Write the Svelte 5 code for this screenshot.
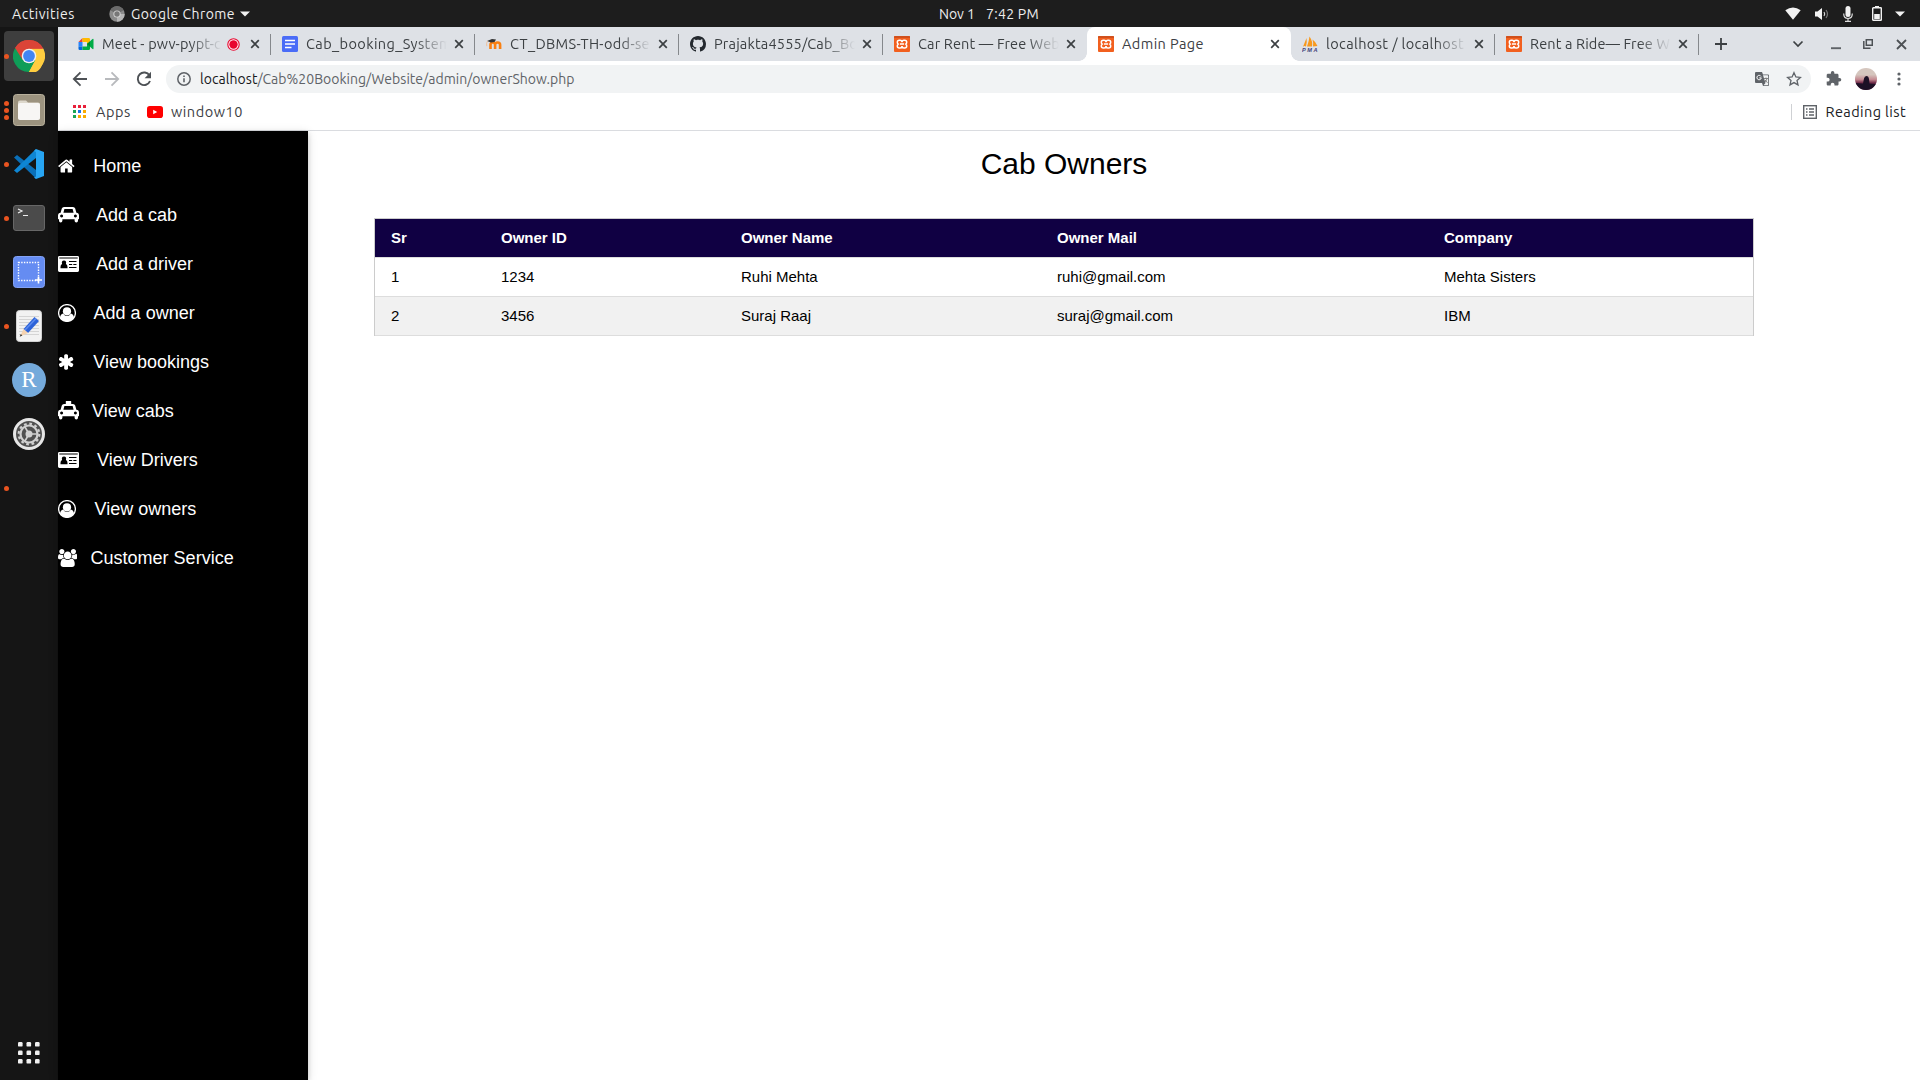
<script>
  const tabs = [
    { icon: 'meet', title: 'Meet - pwv-pypt-c', width: 119, recording: true, divider: true },
    { icon: 'docs', title: 'Cab_booking_System', width: 146, divider: true },
    { icon: 'moodle', title: 'CT_DBMS-TH-odd-se', width: 140, divider: true },
    { icon: 'github', title: 'Prajakta4555/Cab_Bo', width: 144, divider: true },
    { icon: 'xampp', title: 'Car Rent — Free Web', width: 142 },
    { icon: 'xampp', title: 'Admin Page', width: 82, active: true },
    { icon: 'pma', title: 'localhost / localhost', width: 138, divider: true },
    { icon: 'xampp', title: 'Rent a Ride— Free W', width: 140, divider: true }
  ];

  const links = [
    { icon: 'home', label: 'Home', indent: 35.3 },
    { icon: 'car', label: 'Add a cab', indent: 38 },
    { icon: 'card', label: 'Add a driver', indent: 38 },
    { icon: 'user', label: 'Add a owner', indent: 35.6 },
    { icon: 'asterisk', label: 'View bookings', indent: 35.3 },
    { icon: 'taxi', label: 'View cabs', indent: 34 },
    { icon: 'card', label: 'View Drivers', indent: 39 },
    { icon: 'user', label: 'View owners', indent: 36.5 },
    { icon: 'users', label: 'Customer Service', indent: 32.6 }
  ];

  const dock = [
    { icon: 'chrome', dots: 1, current: true },
    { icon: 'files', dots: 3 },
    { icon: 'code', dots: 1 },
    { icon: 'terminal', dots: 1 },
    { icon: 'screenshot', dots: 0 },
    { icon: 'editor', dots: 1 },
    { icon: 'r', dots: 0 },
    { icon: 'settings', dots: 0 },
    { icon: 'blank', dots: 1 }
  ];

  const owners = [
    [1, 1234, 'Ruhi Mehta', 'ruhi@gmail.com', 'Mehta Sisters'],
    [2, 3456, 'Suraj Raaj', 'suraj@gmail.com', 'IBM']
  ];

  // Tracks a label out or in until it fills the given width.
  function fit(node, width) {
    const natural = node.getBoundingClientRect().width;
    node.style.letterSpacing = (width - natural) / node.textContent.length + 'px';
  }
</script>

{#snippet cross()}
  <svg width="10" height="10" viewBox="0 0 10 10"><path d="M1.2 1.2l7.6 7.6M8.8 1.2L1.2 8.8" stroke="#3c4043" stroke-width="1.7" /></svg>
{/snippet}

{#snippet favicon(name)}
  <svg class="favicon" width="16" height="16" viewBox="0 0 16 16">
    {#if name === 'meet'}
      <path d="M4.5 2v4H0.5z" fill="#ea4335" />
      <path d="M.5 6h4v4.5h-4z" fill="#2684fc" />
      <path d="M.5 10.500h4V14H1.800A1.300 1.300 0 0 1 .5 12.700z" fill="#0066da" />
      <path d="M4.500 2h6.200A1.300 1.300 0 0 1 12 3.300V7L9 9.500V6H4.500z" fill="#ffba00" />
      <path d="M4.500 10.500H9V8l3-1.500v6.200A1.300 1.300 0 0 1 10.700 14H4.500z" fill="#00ac47" />
      <path d="M9 8l5.500-5q1-.5 1 .5v9q0 1-1 .5z" fill="#00ac47" />
      <path d="M9 8l3-2.600v5.200z" fill="#00832d" />
    {:else if name === 'docs'}
      <rect width="16" height="16" rx="1.500" fill="#4a6cf7" />
      <path d="M3 4.500h10M3 8h10M3 11.500h6.500" stroke="#fff" stroke-width="1.500" />
    {:else if name === 'moodle'}
      <path d="M4.500 13V8.800q0-2.300 2.300-2.300t2.300 2.300V13M9.100 13V8.800q0-2.300 2.500-2.300t2.500 2.300V13" fill="none" stroke="#f98012" stroke-width="2.600" />
      <path d="M1 5l5-2 4 .5L8.500 6 5 6.500z" fill="#333" />
      <path d="M1.500 5.200q-1.500 2-.7 5" fill="none" stroke="#f3b98a" stroke-width=".8" />
    {:else if name === 'github'}
      <path fill="#24292f" d="M8 0C3.580 0 0 3.580 0 8c0 3.540 2.290 6.530 5.470 7.590.4.070.55-.17.55-.38 0-.19-.01-.82-.01-1.490-2.010.37-2.530-.49-2.690-.94-.09-.23-.48-.94-.82-1.130-.28-.15-.68-.52-.01-.53.63-.01 1.080.58 1.230.82.72 1.210 1.870.87 2.330.66.07-.52.28-.87.51-1.070-1.780-.2-3.640-.89-3.640-3.950 0-.87.31-1.590.82-2.150-.08-.2-.36-1.020.08-2.120 0 0 .67-.21 2.200.82.64-.18 1.320-.27 2-.27s1.360.09 2 .27c1.530-1.040 2.200-.82 2.200-.82.44 1.100.16 1.920.08 2.120.51.56.82 1.270.82 2.150 0 3.070-1.870 3.750-3.650 3.950.29.25.54.73.54 1.480 0 1.070-.01 1.930-.01 2.200 0 .21.15.46.55.38A8.010 8.010 0 0 0 16 8c0-4.420-3.580-8-8-8z" />
    {:else if name === 'xampp'}
      <rect width="16" height="16" rx="1" fill="#f2601f" />
      <path d="M0 1a1 1 0 0 1 1-1h14a1 1 0 0 1 1 1v1H0z" fill="#d1501c" />
      <path d="M8 6.300Q8 4.300 10 4.300h.7q2 0 2 2 0 1.200-.9 1.800.9.600.9 1.800 0 2-2 2H10q-2 0-2-2 0 2-2 2h-.7q-2 0-2-2 0-1.200.9-1.800-.9-.6-.9-1.800 0-2 2-2H6q2 0 2 2zM6 8.100h4" fill="none" stroke="#fff" stroke-width="1.500" />
    {:else}
      <path d="M4 10.500q-1.500-1-3 .2Q3 6 4.500 2q.8 4-.5 8.500zM5 10.500Q7 5 7.500.5q3.500 5 2.500 10zM11 10.500q.5-4-.5-7Q14 6 15.500 10z" fill="#f8991d" />
      <text x="0" y="15.500" font-family="Liberation Sans, sans-serif" font-weight="700" font-style="italic" font-size="5.600" textLength="15.500" fill="#43437a">PMA</text>
    {/if}
  </svg>
{/snippet}

{#snippet menuIcon(name)}
  {#if name === 'home'}
    <svg width="18" height="18" viewBox="64 0 1792 1792"><path d="M1472 992v480q0 26-19 45t-45 19h-384v-384h-256v384h-384q-26 0-45-19t-19-45v-480q0-1 .5-3t.5-3l575-474 575 474q1 2 1 6zm223-69l-62 74q-8 9-21 11h-3q-13 0-21-7l-692-577-692 577q-12 8-24 7-13-2-21-11l-62-74q-8-10-7-23.500t11-21.500l719-599q32-26 76-26t76 26l244 204v-195q0-14 9-23t23-9h192q14 0 23 9t9 23v408l219 182q10 8 11 21.500t-7 23.500z" /></svg>
  {:else if name === 'asterisk'}
    <svg width="18" height="18" viewBox="90 0 1792 1792"><path d="M1546 1050q46 26 59.500 77.500t-12.500 97.500l-64 110q-26 46-77.500 59.500t-97.500-12.500l-266-153v307q0 52-38 90t-90 38h-128q-52 0-90-38t-38-90v-307l-266 153q-46 26-97.500 12.500t-77.500-59.500l-64-110q-26-46-12.500-97.500t59.500-77.500l266-154-266-154q-46-26-59.500-77.500t12.500-97.500l64-110q26-46 77.500-59.500t97.500 12.500l266 153v-307q0-52 38-90t90-38h128q52 0 90 38t38 90v307l266-153q46-26 97.500-12.500t77.500 59.500l64 110q26 46 12.500 97.500t-59.500 77.500l-266 154z" /></svg>
  {:else if name === 'car' || name === 'taxi'}
    <svg class={name} width="21" height="19" viewBox="0 0 21 19">
      {#if name === 'taxi'}<path d="M7.800.3q0-.3.300-.3h4.800q.3 0 .3.300V4H7.800z" />{/if}
      <path transform="translate(0 1.300)" fill-rule="evenodd" d="M6 1.700h9q1.700 0 2.200 1.500l1.200 4.300q2.600.2 2.600 2.800v3.200q0 .5-.5.5H20v1.500q0 1.700-1.700 1.700t-1.700-1.700V14H4.400v1.500q0 1.700-1.700 1.700T1 15.500V14H.5q-.5 0-.5-.5v-3.200q0-2.600 2.600-2.800l1.200-4.300Q4.300 1.700 6 1.700zM6.400 3.800L5.400 7.500h10.200l-1-3.700zM3.600 9.300a1.500 1.500 0 1 0 .01 0zM17.400 9.300a1.500 1.500 0 1 0 .01 0z" />
    </svg>
  {:else if name === 'card'}
    <svg width="21" height="18" viewBox="0 0 21 18">
      <path fill-rule="evenodd" d="M1.400 1h18.200q1.400 0 1.400 1.400v13.200q0 1.400-1.400 1.400H1.400Q0 17 0 15.600V2.400Q0 1 1.400 1zM1.300 2.500v1h18.400v-1zM2.500 13.200h7v-1.300q0-2.500-1.600-2.900 1-3.200-1.900-3.400-2.900.2-1.900 3.400Q2.500 9.400 2.500 11.900zM11 6v1h7.500V6zM11 9v1h3.200V9zM15.300 9v1h3.200V9zM11 12v1h7.500v-1z" />
    </svg>
  {:else if name === 'user'}
    <svg width="18" height="18" viewBox="0 0 18 18">
      <circle cx="9" cy="9" r="8.400" fill="none" stroke="#fff" stroke-width="1.300" />
      <circle cx="9" cy="7.300" r="4.100" />
      <path d="M2 13.400q.5-3.400 3.200-3.900 1.500 2.500 3.800 2.500t3.800-2.500q2.700.5 3.200 3.900-2.600 3.900-7 3.900t-7-3.900z" />
    </svg>
  {:else}
    <svg width="19.300" height="18" viewBox="0 0 1920 1792"><path d="M593 896q-162 5-265 128h-134q-82 0-138-40.500t-56-118.500q0-353 124-353 6 0 43.500 21t97.500 42.500 119 21.500q67 0 133-23-5 37-5 66 0 159 81 256zm1071 637q0 120-73 189.500t-194 69.500h-874q-121 0-194-69.500t-73-189.500q0-53 3.500-103.500t14-109 26.500-108.500 43-97.500 62-81 85.500-53.500 111.500-20q10 0 43 21.500t73 48 107 48 135 21.500 135-21.500 107-48 73-48 43-21.500q61 0 111.500 20t85.500 53.500 62 81 43 97.500 26.500 108.500 14 109 3.500 103.500zm-1024-1277q0 106-75 181t-181 75-181-75-75-181 75-181 181-75 181 75 75 181zm704 384q0 159-112.500 271.500t-271.500 112.500-271.500-112.500-112.500-271.500 112.500-271.500 271.500-112.500 271.500 112.500 112.500 271.500zm576 225q0 78-56 118.500t-138 40.500h-134q-103-123-265-128 93-134 93-293 0-29-5-66 66 23 133 23 59 0 119-21.500t97.500-42.500 43.500-21q112 0 112 353zm-128-609q0 106-75 181t-181 75-181-75-75-181 75-181 181-75 181 75 75 181z" /></svg>
  {/if}
{/snippet}

{#snippet dockIcon(name)}
  {#if name === 'r'}
    <span class="r-logo">R</span>
  {:else}
    <svg width="32" height="32" viewBox="0 0 32 32">
      {#if name === 'chrome'}
        <path d="M16 16L2.140 8A16 16 0 0 1 29.860 8z" fill="#db4437" />
        <path d="M16 16L29.860 8A16 16 0 0 1 16 32l-3-6z" fill="#ffcd40" />
        <path d="M16 16l6.500 4L16 32A16 16 0 0 1 2.140 8z" fill="#0f9d58" />
        <path d="M16 8.500h14.150Q33 16 29 25.300T16 32l6.500-12z" fill="#ffcd40" />
        <path d="M2.140 8L9.600 20l1-8L16 8.700h14.200A16 16 0 0 0 2.140 8z" fill="#db4437" />
        <circle cx="16" cy="16" r="7.300" fill="#f1f1f1" />
        <circle cx="16" cy="16" r="5.900" fill="#4285f4" />
      {:else if name === 'files'}
        <rect x=".5" y=".5" width="31" height="31" rx="3" fill="#9c937f" stroke="#b8b09c" />
        <path d="M5 8.500q0-2 2-2h6l2 2h10q2 0 2 2v13q0 2-2 2H7q-2 0-2-2z" fill="#ddd8cc" />
        <rect x="5" y="9" width="22" height="17" rx="2" fill="#f7f6f4" />
      {:else if name === 'code'}
        <path d="M1 9.500L4 7l19 15v8.500z" fill="#0a6fb8" />
        <path d="M1 22.500L4 25 23 10V1z" fill="#0e86d4" />
        <path d="M23 1l8 3v24l-8 3-2-1.500 2-1V4l-2-1z" fill="#27a5f3" />
      {:else if name === 'terminal'}
        <rect x=".5" y="3.500" width="31" height="25" rx="2.500" fill="#4b4b4b" stroke="#676767" />
        <path d="M5 7l4 2-4 2M10 13.500h5" fill="none" stroke="#eee" stroke-width="1.200" />
      {:else if name === 'screenshot'}
        <rect x=".5" y=".5" width="31" height="31" rx="3" fill="#658cf2" stroke="#83a2f5" />
        <path d="M5.500 6.500h20v18h-20z" fill="none" stroke="#fff" stroke-width="1.400" stroke-dasharray="1.400 1.300" />
        <path d="M25.500 20.500v7M22 24h7" stroke="#fff" stroke-width="1.600" />
      {:else if name === 'editor'}
        <rect x="3.500" y=".5" width="25" height="31" rx="3" fill="#f2f2f2" stroke="#d2d2d2" />
        <path d="M6 6.500h20M6 9.500h20M6 12.500h20M6 15.500h20M6 18.500h20M6 21.500h20M6 24.500h20" stroke="#d4d4d4" />
        <path d="M10.500 19L21.500 7l4.500 4L15 23z" fill="#2d63d8" />
        <path d="M12 20L23 8.500" stroke="#5c8bf0" stroke-width="1.500" />
        <path d="M10.500 19l4.500 4-8 3.500z" fill="#f5d3b0" /><path d="M7.800 24l1.500 1.500-2.600 1.200z" fill="#333" />
      {:else if name === 'settings'}
        <circle cx="16" cy="16" r="14.500" fill="#505050" stroke="#e6e6e6" stroke-width="3" />
        <circle cx="16" cy="16" r="10.300" fill="none" stroke="#d0d0d0" stroke-width="2.200" stroke-dasharray="2.700 2.693" />
        <circle cx="16" cy="16" r="8.500" fill="none" stroke="#d0d0d0" stroke-width="2.200" />
        <circle cx="16" cy="16" r="3.500" fill="#d0d0d0" />
        <path d="M16 16l-4-7M16 16h8M16 16l-4 7" stroke="#d0d0d0" stroke-width="1.600" />
      {/if}
    </svg>
  {/if}
{/snippet}

<div class="desktop">
  <header class="topbar">
    <div class="topbar-left">
      <span class="label activities" use:fit={63}>Activities</span>
      <svg width="16" height="16" viewBox="0 0 16 16">
        <circle cx="8" cy="8" r="7.700" fill="#8b8b8b" />
        <path d="M8 8L1.300 4.200A7.700 7.700 0 0 1 14.700 4.200z" fill="#6b6b6b" />
        <path d="M8 8h7.700A7.700 7.700 0 0 1 8 15.700z" fill="#b5b5b5" />
        <circle cx="8" cy="8" r="3.600" fill="#d8d8d8" /><circle cx="8" cy="8" r="2.700" fill="#777" />
      </svg>
      <span class="label app" use:fit={104}>Google Chrome</span>
      <svg class="caret" width="10" height="6" viewBox="0 0 10 6"><path d="M0 .5h10l-5 5z" fill="#f2f2f2" /></svg>
    </div>
    <div class="clock"><span class="label" use:fit={36}>Nov 1</span><span class="label" use:fit={53}>7:42 PM</span></div>
    <div class="status">
      <svg width="16" height="13" viewBox="0 0 16 13"><path d="M.3 3.200Q8-2.200 15.700 3.200L8 12.700z" fill="#f2f2f2" /></svg>
      <svg width="16" height="14" viewBox="0 0 16 14"><path d="M1 4.500h2.500L8 1v12L3.500 9.500H1z" fill="#f2f2f2" /><path d="M10 5q1.500 2 0 4" fill="none" stroke="#ddd" stroke-width="1.200" /><path d="M12 3q3 4 0 8" fill="none" stroke="#777" stroke-width="1.200" /></svg>
      <svg width="10" height="16" viewBox="0 0 10 16"><rect x="2.500" width="5" height="11" rx="2.500" fill="#f2f2f2" /><path d="M.7 7.500q0 5 4.300 5t4.300-5M5 12.500V15M2 15.300h6" fill="none" stroke="#ddd" stroke-width="1.200" /></svg>
      <svg width="10" height="15" viewBox="0 0 10 15"><path d="M3 0h4v2H3z" fill="#f2f2f2" /><rect x=".7" y="1.700" width="8.600" height="12.600" rx=".6" fill="none" stroke="#f2f2f2" stroke-width="1.400" /><path d="M2.200 8h5.600v5H2.200z" fill="#f2f2f2" /></svg>
      <svg width="10" height="6" viewBox="0 0 10 6"><path d="M0 .5h10l-5 5z" fill="#f2f2f2" /></svg>
    </div>
  </header>

  <div class="workspace">
    <aside class="dock">
      {#each dock as app}
        <div class="slot" class:current={app.current}>
          <span class="dots">{#each Array(app.dots) as _}<i></i>{/each}</span>
          {@render dockIcon(app.icon)}
        </div>
      {/each}
      <div class="slot grid-button">
        <svg width="22" height="22" viewBox="0 0 22 22">
          {#each [0, 8.500, 17] as y}{#each [0, 8.500, 17] as x}<rect {x} {y} width="4.600" height="4.600" rx="1.200" fill="#f0f0f0" />{/each}{/each}
        </svg>
      </div>
    </aside>

    <section class="browser">
      <nav class="tabs">
        {#each tabs as tab}
          <div class="tab" class:active={tab.active} class:divider={tab.divider}>
            {@render favicon(tab.icon)}
            <div class="title" class:fade={!tab.active}><span class="label" use:fit={tab.width}>{tab.title}</span></div>
            {#if tab.recording}
              <svg class="recording" width="13" height="13" viewBox="0 0 13 13"><circle cx="6.500" cy="6.500" r="5.700" fill="#fff" stroke="#e8062f" stroke-width="1.100" /><circle cx="6.500" cy="6.500" r="4.200" fill="#e8062f" /></svg>
            {/if}
            {@render cross()}
          </div>
        {/each}
        <svg class="new-tab" width="12" height="12" viewBox="0 0 12 12"><path d="M6 0v12M0 6h12" stroke="#3c4043" stroke-width="1.800" /></svg>
        <div class="window-buttons">
          <svg width="12" height="12" viewBox="0 0 12 12"><path d="M1.500 3.500L6 8l4.500-4.500" fill="none" stroke="#3c4043" stroke-width="1.700" /></svg>
          <svg width="10" height="12" viewBox="0 0 10 12"><path d="M0 10.200h10" stroke="#5f6368" stroke-width="1.900" /></svg>
          <svg width="10" height="10" viewBox="0 0 10 10"><path d="M3.300.8h6v5.500h-6zM.8 2v7.200h6.700" fill="none" stroke="#4d5155" stroke-width="1.500" /></svg>
          <svg width="11" height="11" viewBox="0 0 11 11"><path d="M1 1l9 9M10 1l-9 9" stroke="#4d5155" stroke-width="1.800" /></svg>
        </div>
      </nav>

      <div class="toolbar">
        <svg width="16" height="16" viewBox="0 0 16 16"><path d="M15 8H2M8.500 1.300L1.800 8l6.700 6.700" fill="none" stroke="#4d5155" stroke-width="1.800" /></svg>
        <svg width="16" height="16" viewBox="0 0 16 16"><path d="M1 8h13M7.500 1.300L14.200 8l-6.700 6.700" fill="none" stroke="#b8babd" stroke-width="1.800" /></svg>
        <svg width="16" height="16" viewBox="0 0 16 16"><path d="M13.500 4.500A6.300 6.300 0 1 0 14 10" fill="none" stroke="#4d5155" stroke-width="1.900" /><path d="M15 .8v6.400H8.600z" fill="#4d5155" /></svg>
        <div class="address">
          <svg width="16" height="16" viewBox="0 0 16 16"><circle cx="8" cy="8" r="6.200" fill="none" stroke="#5f6368" stroke-width="1.500" /><path d="M8 7.200v4M8 4.500v1.600" stroke="#5f6368" stroke-width="1.600" /></svg>
          <span class="url"><b class="label" use:fit={57.5}>localhost</b><span class="label" use:fit={317}>/Cab%20Booking/Website/admin/ownerShow.php</span></span>
          <svg width="14" height="14" viewBox="0 0 14 14"><path d="M1 0h6l1 2.500h5q1 0 1 1V13q0 1-1 1H8l-1-3H1q-1 0-1-1V1q0-1 1-1z" fill="#5f6368" /><path d="M8 3.300h4.500q.7 0 .7.700v8.500q0 .7-.7.700H8.500L10.500 11z" fill="#f1f3f4" /><path d="M6 4.400a2.200 2.200 0 1 0 .3 1.500H4.300" fill="none" stroke="#fff" stroke-width="1" /><path d="M9 6.500h4M11 5.500v1M12 6.800q-.7 2.200-2.500 3.500M10 8l2.500 2.800" fill="none" stroke="#777" stroke-width=".9" /></svg>
          <svg class="star" width="16" height="16" viewBox="0 0 16 16"><path d="M8 1.700l1.900 4.200 4.500.5-3.400 3 1 4.500L8 11.600l-4 2.300 1-4.500-3.400-3 4.500-.5z" fill="none" stroke="#5f6368" stroke-width="1.300" /></svg>
        </div>
        <svg class="puzzle" width="16" height="16" viewBox="1 1 23 23"><path fill="#5f6368" d="M20.500 11H19V7c0-1.100-.9-2-2-2h-4V3.500a2.500 2.500 0 0 0-5 0V5H4c-1.100 0-1.990.9-1.990 2v3.800H3.500a2.700 2.700 0 0 1 0 5.400H2V20c0 1.100.9 2 2 2h3.800v-1.500a2.700 2.700 0 0 1 5.400 0V22H17c1.100 0 2-.9 2-2v-4h1.500a2.500 2.500 0 0 0 0-5z" /></svg>
        <span class="avatar"><svg width="22" height="22" viewBox="0 0 22 22"><path d="M0 15l8 .5 1-5Q9.500 8 11.500 8t2.500 3l.5 4.500L22 16v6H0z" fill="#1c1025" /></svg></span>
        <svg width="4" height="14" viewBox="0 0 4 14"><g fill="#5f6368"><circle cx="2" cy="2" r="1.600" /><circle cx="2" cy="7" r="1.600" /><circle cx="2" cy="12" r="1.600" /></g></svg>
      </div>

      <div class="bookmarks">
        <svg width="13" height="13" viewBox="0 0 13 13">
          <path d="M0 0h3v3H0zM5 0h3v3H5zM10 0h3v3h-3z" fill="#e8203a" /><path d="M0 5h3v3H0zM0 10h3v3H0z" fill="#1aa655" /><path d="M5 5h3v3H5z" fill="#1a73e8" /><path d="M10 5h3v3h-3zM5 10h3v3H5zM10 10h3v3h-3z" fill="#f9ab00" />
        </svg>
        <span class="label apps" use:fit={35}>Apps</span>
        <svg width="16" height="12" viewBox="0 0 16 12"><rect width="16" height="12" rx="2.800" fill="#f00" /><path d="M6.200 3.700v4.600l4-2.300z" fill="#fff" /></svg>
        <span class="label" use:fit={72}>window10</span>
        <div class="reading">
          <svg width="14" height="14" viewBox="0 0 14 14"><rect x=".7" y=".7" width="12.600" height="12.600" fill="none" stroke="#5f6368" stroke-width="1.400" /><path d="M3 4h1.500M6 4h5M3 7h1.500M6 7h5M3 10h1.500M6 10h5" stroke="#5f6368" stroke-width="1.400" /></svg>
          <span class="label" use:fit={80.5}>Reading list</span>
        </div>
      </div>

      <div class="page">
        <nav class="sidebar">
          {#each links as link}
            <a href="#top">
              <span class="menu-icon" style:width="{link.indent}px">{@render menuIcon(link.icon)}</span>{link.label}
            </a>
          {/each}
        </nav>
        <main>
          <h1>Cab Owners</h1>
          <table>
            <colgroup><col class="c1" /><col class="c2" /><col class="c3" /><col class="c4" /><col /></colgroup>
            <thead>
              <tr><th>Sr</th><th>Owner ID</th><th>Owner Name</th><th>Owner Mail</th><th>Company</th></tr>
            </thead>
            <tbody>
              {#each owners as owner}
                <tr>{#each owner as value}<td>{value}</td>{/each}</tr>
              {/each}
            </tbody>
          </table>
        </main>
      </div>
    </section>
  </div>
</div>

<style>
  :global(body) { margin: 0; overflow: hidden; }
  * { box-sizing: border-box; }
  svg { display: block; flex: none; }
  .desktop { width: 1920px; height: 1080px; display: flex; flex-direction: column; font: 14.5px/20px Ubuntu, 'Noto Sans', sans-serif; }
  .label { white-space: pre; flex: none; display: inline-block; }

  .topbar { height: 27px; background: #1d1d1d; color: #eee; display: grid; grid-template-columns: 1fr auto 1fr; align-items: center; font-size: 14px; }
  .topbar-left { display: flex; align-items: center; padding-left: 12px; }
  .activities { margin-right: 34px; }
  .app { margin-left: 6px; }
  .caret { margin-left: 5px; }
  .clock { display: flex; gap: 11px; margin-left: 58px; }
  .status { display: flex; align-items: center; justify-content: flex-end; gap: 13px; padding-right: 15px; }
  .status svg:nth-child(2) { margin-right: -1px; }
  .status svg:nth-child(3) { margin-right: 6px; margin-left: 1px; }

  .workspace { flex: 1; min-height: 0; display: flex; }
  .dock { width: 58px; background: #151515; display: flex; flex-direction: column; align-items: center; gap: 4px; padding: 4px 0 2px; }
  .slot { width: 50px; height: 50px; border-radius: 4px; display: grid; place-items: center; position: relative; }
  .current { background: #3e3e3e; }
  .grid-button { margin-top: auto; }
  .dots { position: absolute; left: 0; top: 0; height: 50px; display: flex; flex-direction: column; justify-content: center; gap: 2px; }
  .dots i { width: 5px; height: 5px; border-radius: 50%; background: #e95420; }
  .r-logo { width: 34px; height: 34px; border-radius: 50%; background: #75aadb; color: #fff; font: 23px/34px 'Liberation Serif', serif; text-align: center; }

  .browser { flex: 1; min-width: 0; display: flex; flex-direction: column; background: #fff; color: #3c4043; }
  .tabs { height: 34px; background: #dee1e6; display: flex; align-items: center; padding-left: 9px; }
  .tab { width: 204px; height: 34px; display: flex; align-items: center; padding: 0 11px; flex: none; position: relative; }
  .tab.divider::after { content: ''; position: absolute; right: 0; top: 7px; width: 1px; height: 21px; background: #85888c; }
  .active { background: #fff; border-radius: 8px 8px 0 0; }
  .active::before, .active::after { content: ''; position: absolute; bottom: 0; width: 8px; height: 8px; }
  .active::before { left: -8px; background: radial-gradient(circle at 0 0, #dee1e6 7.5px, #fff 8px); }
  .active::after { right: -8px; background: radial-gradient(circle at 100% 0, #dee1e6 7.5px, #fff 8px); }
  .title { flex: 1; min-width: 0; margin: 0 7px 0 8px; overflow: hidden; height: 20px; }
  .fade { mask-image: linear-gradient(to left, transparent, #000 32px); }
  .recording { margin-right: 10px; margin-left: -2px; }
  .new-tab { margin-left: 16px; }
  .window-buttons { margin-left: auto; display: flex; align-items: center; gap: 23px; padding-right: 13px; }
  .window-buttons svg:first-child { margin-right: 4px; }
  .window-buttons svg:nth-child(2) { margin-right: -1px; }

  .toolbar { height: 36px; display: flex; align-items: center; padding: 0 19px 0 14px; }
  .toolbar > svg:nth-child(2), .toolbar > svg:nth-child(3) { margin-left: 16px; }
  .address { flex: 1; height: 28px; margin: 0 14px 0 14px; border-radius: 14px; background: #f1f3f4; display: flex; align-items: center; padding: 0 10px; }
  .address { margin-right: 15px; padding-right: 9px; }
  .url { flex: 1; margin-left: 8px; color: #5f6368; font-size: 14px; }
  .url b { font-weight: 400; color: #17191c; }
  .star { margin-left: 17px; }
  .avatar { width: 22px; height: 22px; border-radius: 50%; overflow: hidden; margin: 0 20px 0 13px; background: linear-gradient(#d5c6be 30%, #c58b92 52%, #6d2846 68%); }
  .bookmarks { height: 34px; border-bottom: 1px solid #dadce0; display: flex; align-items: center; padding: 0 14px 4px 15px; }
  .bookmarks .apps { margin: 0 16px 0 10px; }
  .bookmarks > .label:not(.apps) { margin-left: 8px; }
  .reading { margin-left: auto; border-left: 1px solid #cfd1d4; height: 16px; display: flex; align-items: center; gap: 9px; padding-left: 11px; color: #202124; }

  .page { flex: 1; min-height: 0; display: flex; font-family: 'Liberation Sans', Arial, sans-serif; color: #000; }
  .sidebar { width: 250px; background: #000; padding-top: 10px; box-shadow: 0 2px 5px rgba(0, 0, 0, .16), 0 2px 10px rgba(0, 0, 0, .12); }
  .sidebar a { display: flex; align-items: center; height: 49px; color: #fff; font-size: 18px; text-decoration: none; white-space: nowrap; }
  .menu-icon { flex: none; }
  .menu-icon svg { fill: #fff; }
  .menu-icon .car { margin-top: -2px; }
  main { flex: 1; padding: 10px 166px 0 66px; }
  h1 { margin: 0 0 32px; font-size: 30px; line-height: 45px; font-weight: 400; text-align: center; }
  table { width: 1380px; table-layout: fixed; border: 1px solid #ccc; border-bottom: 0; border-spacing: 0; font-size: 15px; line-height: 22px; }
  th, td { height: 39px; padding: 0 8px; text-align: left; border-bottom: 1px solid #ddd; }
  th:first-child, td:first-child { padding-left: 16px; }
  th { background: #100043; color: #fff; }
  tbody tr:nth-child(even) { background: #f1f1f1; }
  .c1 { width: 118px; }
  .c2 { width: 240px; }
  .c3 { width: 316px; }
  .c4 { width: 387px; }
</style>
